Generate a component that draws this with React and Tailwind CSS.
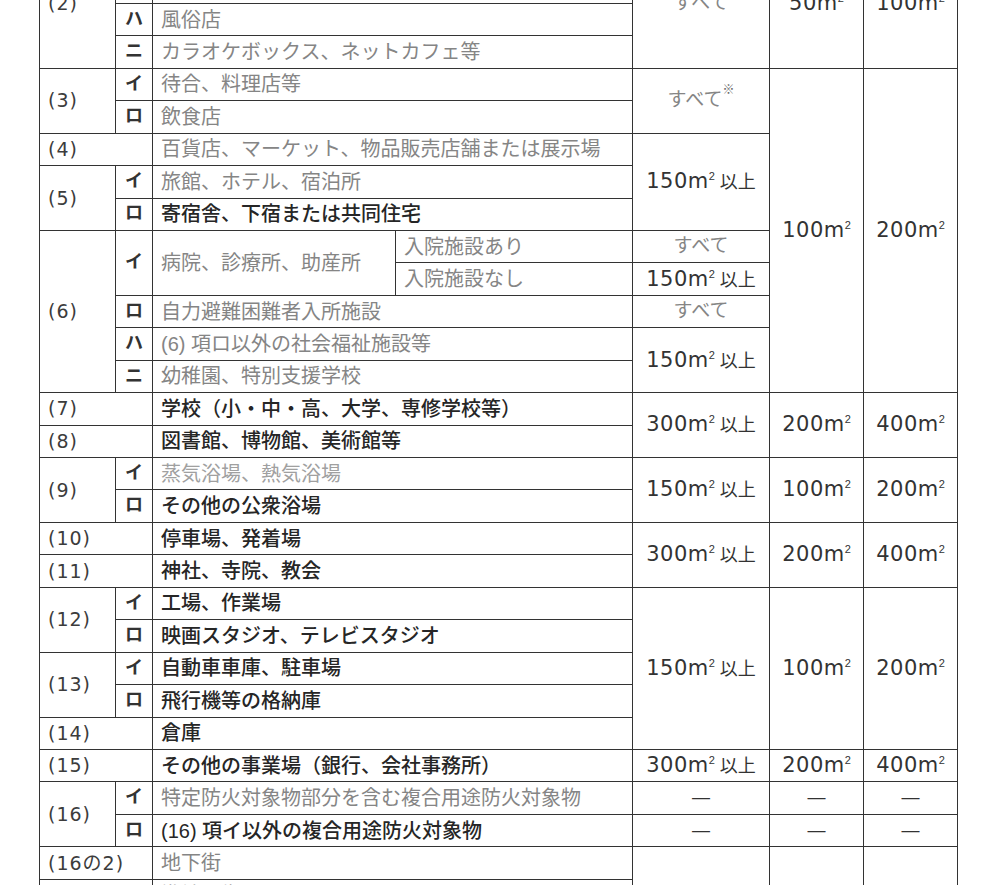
import React from "react";

const B = "border border-[#333]";
const GRAY = "text-[#858585]";
const DARK = "text-[#262626] font-medium";
const WIDE = "font-['DejaVu_Sans','Noto_Sans_CJK_JP',sans-serif]";

const Label = ({ children, rowSpan, colSpan }) => (
  <td
    rowSpan={rowSpan}
    colSpan={colSpan}
    className={`${B} pl-2 ${WIDE} text-[19px] tracking-[1px] text-[#3c3c3c] whitespace-nowrap`}
  >
    {children}
  </td>
);

const Sub = ({ children, rowSpan }) => (
  <td rowSpan={rowSpan} className={`${B} text-center text-[18px] font-bold text-[#333]`}>
    {children}
  </td>
);

const Name = ({ children, dark, light, colSpan = 2, rowSpan }) => (
  <td
    colSpan={colSpan}
    rowSpan={rowSpan}
    className={`${B} pl-2 text-[20px] whitespace-nowrap ${
      dark ? DARK : light ? "text-[#a0a0a0]" : GRAY
    }`}
  >
    {children}
  </td>
);

const Area = ({ n, ijo }) => (
  <span className="whitespace-nowrap">
    <span className={`${WIDE} text-[21px] tracking-[0.5px]`}>{n}m</span>
    <sup className="text-[11px] -top-2">2</sup>
    {ijo && <span className="ml-[5px] text-[18px]">以上</span>}
  </span>
);

const Val = ({ children, rowSpan, gray }) => (
  <td
    rowSpan={rowSpan}
    className={`${B} text-center ${gray ? "text-[#858585] text-[19px]" : "text-[#333]"}`}
  >
    {children}
  </td>
);

const Dash = () => <span className="text-[18px] text-[#333]">—</span>;

const Row = ({ children }) => <tr className="h-[32.44px]">{children}</tr>;

export default function App() {
  return (
    <div className="h-[885px] w-[986px] overflow-hidden bg-white">
      <table
        className="-mt-[62px] ml-[39px] w-[918px] table-fixed border-collapse leading-[1.2]"
        style={{ fontFamily: '"Liberation Sans", "Noto Sans CJK JP", sans-serif' }}
      >
        <colgroup>
          <col className="w-[76px]" />
          <col className="w-[37px]" />
          <col className="w-[243px]" />
          <col className="w-[237px]" />
          <col className="w-[137px]" />
          <col className="w-[94px]" />
          <col className="w-[94px]" />
        </colgroup>
        <tbody>
          <Row>
            <Label rowSpan={4}>(2)</Label>
            <Sub>イ</Sub>
            <Name>キャバレー等</Name>
            <Val rowSpan={4} gray>すべて</Val>
            <Val rowSpan={4}><Area n="50" /></Val>
            <Val rowSpan={4}><Area n="100" /></Val>
          </Row>
          <Row>
            <Sub>ロ</Sub>
            <Name>遊技場</Name>
          </Row>
          <Row>
            <Sub>ハ</Sub>
            <Name>風俗店</Name>
          </Row>
          <Row>
            <Sub>ニ</Sub>
            <Name>カラオケボックス、ネットカフェ等</Name>
          </Row>

          <Row>
            <Label rowSpan={2}>(3)</Label>
            <Sub>イ</Sub>
            <Name>待合、料理店等</Name>
            <Val rowSpan={2} gray>
              すべて<sup className="text-[12px] -top-3 text-[#666]">※</sup>
            </Val>
            <Val rowSpan={10}><Area n="100" /></Val>
            <Val rowSpan={10}><Area n="200" /></Val>
          </Row>
          <Row>
            <Sub>ロ</Sub>
            <Name>飲食店</Name>
          </Row>

          <Row>
            <Label colSpan={2}>(4)</Label>
            <Name>百貨店、マーケット、物品販売店舗または展示場</Name>
            <Val rowSpan={3}><Area n="150" ijo /></Val>
          </Row>
          <Row>
            <Label rowSpan={2}>(5)</Label>
            <Sub>イ</Sub>
            <Name>旅館、ホテル、宿泊所</Name>
          </Row>
          <Row>
            <Sub>ロ</Sub>
            <Name dark>寄宿舎、下宿または共同住宅</Name>
          </Row>

          <Row>
            <Label rowSpan={5}>(6)</Label>
            <Sub rowSpan={2}>イ</Sub>
            <Name colSpan={1} rowSpan={2}>病院、診療所、助産所</Name>
            <Name colSpan={1}>入院施設あり</Name>
            <Val gray>すべて</Val>
          </Row>
          <Row>
            <Name colSpan={1}>入院施設なし</Name>
            <Val><Area n="150" ijo /></Val>
          </Row>
          <Row>
            <Sub>ロ</Sub>
            <Name>自力避難困難者入所施設</Name>
            <Val gray>すべて</Val>
          </Row>
          <Row>
            <Sub>ハ</Sub>
            <Name>(6) 項ロ以外の社会福祉施設等</Name>
            <Val rowSpan={2}><Area n="150" ijo /></Val>
          </Row>
          <Row>
            <Sub>ニ</Sub>
            <Name>幼稚園、特別支援学校</Name>
          </Row>

          <Row>
            <Label colSpan={2}>(7)</Label>
            <Name dark>学校（小・中・高、大学、専修学校等）</Name>
            <Val rowSpan={2}><Area n="300" ijo /></Val>
            <Val rowSpan={2}><Area n="200" /></Val>
            <Val rowSpan={2}><Area n="400" /></Val>
          </Row>
          <Row>
            <Label colSpan={2}>(8)</Label>
            <Name dark>図書館、博物館、美術館等</Name>
          </Row>

          <Row>
            <Label rowSpan={2}>(9)</Label>
            <Sub>イ</Sub>
            <Name light>蒸気浴場、熱気浴場</Name>
            <Val rowSpan={2}><Area n="150" ijo /></Val>
            <Val rowSpan={2}><Area n="100" /></Val>
            <Val rowSpan={2}><Area n="200" /></Val>
          </Row>
          <Row>
            <Sub>ロ</Sub>
            <Name dark>その他の公衆浴場</Name>
          </Row>

          <Row>
            <Label colSpan={2}>(10)</Label>
            <Name dark>停車場、発着場</Name>
            <Val rowSpan={2}><Area n="300" ijo /></Val>
            <Val rowSpan={2}><Area n="200" /></Val>
            <Val rowSpan={2}><Area n="400" /></Val>
          </Row>
          <Row>
            <Label colSpan={2}>(11)</Label>
            <Name dark>神社、寺院、教会</Name>
          </Row>

          <Row>
            <Label rowSpan={2}>(12)</Label>
            <Sub>イ</Sub>
            <Name dark>工場、作業場</Name>
            <Val rowSpan={5}><Area n="150" ijo /></Val>
            <Val rowSpan={5}><Area n="100" /></Val>
            <Val rowSpan={5}><Area n="200" /></Val>
          </Row>
          <Row>
            <Sub>ロ</Sub>
            <Name dark>映画スタジオ、テレビスタジオ</Name>
          </Row>
          <Row>
            <Label rowSpan={2}>(13)</Label>
            <Sub>イ</Sub>
            <Name dark>自動車車庫、駐車場</Name>
          </Row>
          <Row>
            <Sub>ロ</Sub>
            <Name dark>飛行機等の格納庫</Name>
          </Row>
          <Row>
            <Label colSpan={2}>(14)</Label>
            <Name dark>倉庫</Name>
          </Row>

          <Row>
            <Label colSpan={2}>(15)</Label>
            <Name dark>その他の事業場（銀行、会社事務所）</Name>
            <Val><Area n="300" ijo /></Val>
            <Val><Area n="200" /></Val>
            <Val><Area n="400" /></Val>
          </Row>

          <Row>
            <Label rowSpan={2}>(16)</Label>
            <Sub>イ</Sub>
            <Name>特定防火対象物部分を含む複合用途防火対象物</Name>
            <Val><Dash /></Val>
            <Val><Dash /></Val>
            <Val><Dash /></Val>
          </Row>
          <Row>
            <Sub>ロ</Sub>
            <Name dark>(16) 項イ以外の複合用途防火対象物</Name>
            <Val><Dash /></Val>
            <Val><Dash /></Val>
            <Val><Dash /></Val>
          </Row>

          <Row>
            <Label colSpan={2}>(16の2)</Label>
            <Name>地下街</Name>
            <Val rowSpan={2} />
            <Val rowSpan={2} />
            <Val rowSpan={2} />
          </Row>
          <Row>
            <Label colSpan={2}>(16の3)</Label>
            <Name>準地下街</Name>
          </Row>
        </tbody>
      </table>
    </div>
  );
}
